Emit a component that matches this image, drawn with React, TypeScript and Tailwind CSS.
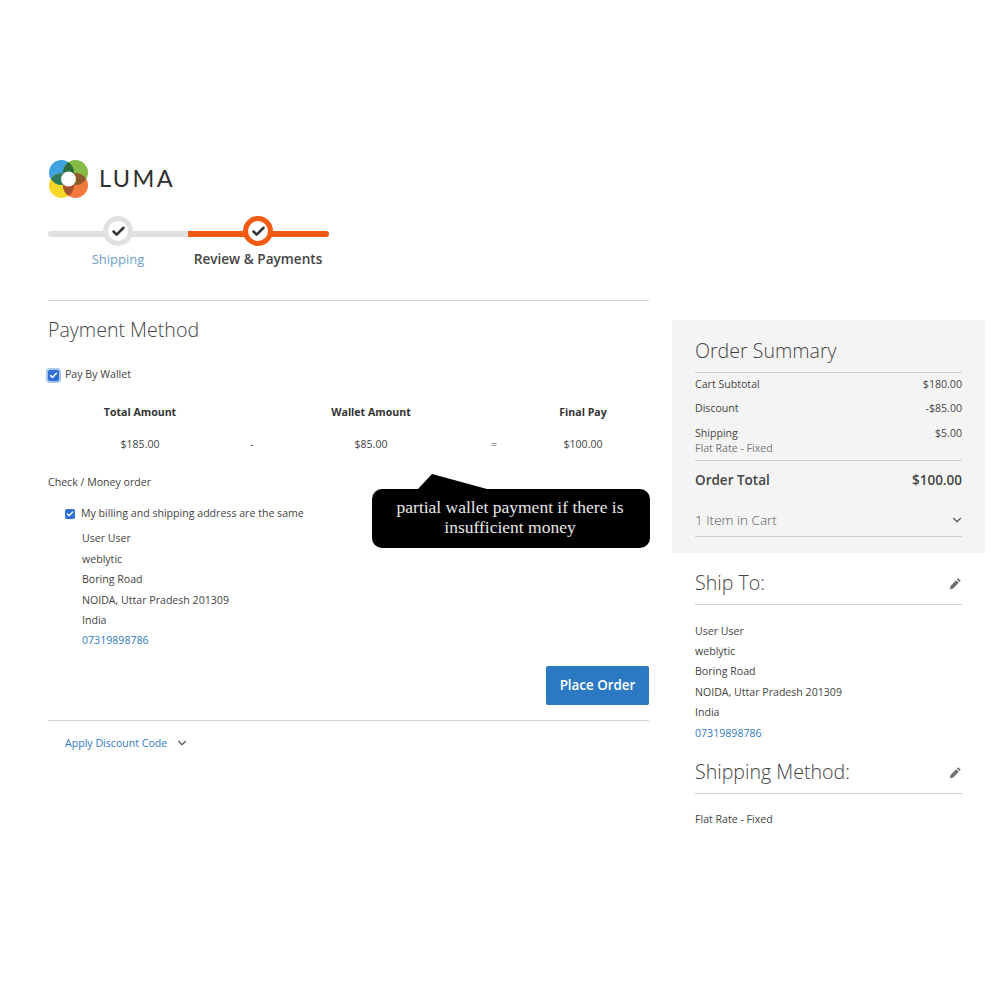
import { Check, ChevronDown } from "lucide-react";

const font = { fontFamily: '"Open Sans", sans-serif' };

function Logo() {
  return (
    <svg width="39" height="38" viewBox="0 0 39 38">
      <circle cx="12.5" cy="12.5" r="12.5" fill="#3fa3df" />
      <circle cx="26.5" cy="12.5" r="12.5" fill="#86bb45" />
      <circle cx="12.5" cy="25.5" r="12.5" fill="#f7d828" />
      <circle cx="26.5" cy="25.5" r="12.5" fill="#f37a3e" />
      <path d="M1.82 19A12.5 12.5 0 0 1 23.18 19A12.5 12.5 0 0 1 1.82 19z" fill="#2f7a5c" />
      <path d="M15.82 19A12.5 12.5 0 0 1 37.18 19A12.5 12.5 0 0 1 15.82 19z" fill="#8a5a28" />
      <path d="M19.5 2.14A12.5 12.5 0 0 1 19.5 22.86A12.5 12.5 0 0 1 19.5 2.14z" fill="#2b6b3c" />
      <path d="M19.5 15.14A12.5 12.5 0 0 1 19.5 35.86A12.5 12.5 0 0 1 19.5 15.14z" fill="#a5532a" />
      <circle cx="19.5" cy="19" r="7.5" fill="#fff" />
    </svg>
  );
}

function Step({ active, label }: { active?: boolean; label: string }) {
  return (
    <div className="flex w-[140px] flex-col items-center">
      <div className={`flex h-[30px] w-[30px] items-center justify-center rounded-full border-[5px] bg-white ${active ? "border-[#f15a12]" : "border-[#e0e0e0]"}`}>
        <Check size={15} strokeWidth={4} className="text-[#333]" />
      </div>
      <div className={`mt-[3px] leading-[20px] whitespace-nowrap ${active ? "text-[13.6px] font-semibold text-[#444]" : "text-[13px] text-[#6c9fcb]"}`}>{label}</div>
    </div>
  );
}

function Address() {
  return (
    <div className="text-[10.6px] leading-[20.4px] text-[#444]">
      <div>User User</div>
      <div>weblytic</div>
      <div>Boring Road</div>
      <div>NOIDA, Uttar Pradesh 201309</div>
      <div>India</div>
      <div className="text-[#2f7cc4]">07319898786</div>
    </div>
  );
}

function SummaryRow({ label, value, sub }: { label: string; value: string; sub?: string }) {
  return (
    <div className={`flex justify-between text-[10.6px] leading-[16px] text-[#444] ${sub ? "pt-[1px]" : ""}`}>
      <div>
        <div>{label}</div>
        {sub && <div className="leading-[15px] text-[#777]">{sub}</div>}
      </div>
      <div>{value}</div>
    </div>
  );
}

function EditIcon() {
  return (
    <svg width="13" height="13" viewBox="0 0 13 13" className="mt-[8px]">
      <path d="M9.2 1.2l2.6 2.6-1.3 1.3-2.6-2.6zM7.2 3.2l2.6 2.6-5.6 5.6-3.4.9.9-3.5z" fill="#707070" />
    </svg>
  );
}

function SideTitle({ title }: { title: string }) {
  return (
    <div className="flex h-[36px] items-start justify-between border-b border-[#cfcfcf]">
      <div className="text-[19.6px] leading-[28px] font-light text-[#444]">{title}</div>
      <EditIcon />
    </div>
  );
}

function AmountColumn({ title, value, center }: { title: string; value: string; center: string }) {
  return (
    <div className={`absolute top-0 flex w-[125px] -translate-x-1/2 flex-col items-center ${center}`}>
      <div className="text-[10.6px] leading-[16px] font-bold text-[#333]">{title}</div>
      <div className="mt-[16px] text-[10.6px] leading-[16px] text-[#444]">{value}</div>
    </div>
  );
}

export default function App() {
  return (
    <div className="relative h-[1000px] w-[1000px] overflow-hidden bg-white" style={font}>
      <div className="pt-[160px] pl-[49px]">
        <div className="flex h-[38px] items-center gap-[11px]">
          <Logo />
          <span className="text-[23.5px] leading-none font-normal tracking-[2.4px] text-[#2e2e2e]" style={{ fontFamily: '"Lato", sans-serif' }}>LUMA</span>
        </div>
      </div>
      <div className="pl-[48px]">
        <div className="relative mt-[18px] flex h-[84px] w-[281px] items-start">
          <div className="absolute top-[15px] left-0 h-[6px] w-[140px] rounded-l-full bg-[#e0e0e0]" />
          <div className="absolute top-[15px] left-[140px] h-[6px] w-[141px] rounded-r-full bg-[#f15a12]" />
          <div className="relative z-10 flex">
            <Step label="Shipping" />
            <Step active label="Review & Payments" />
          </div>
        </div>
      </div>

      <div className="flex items-start pl-[48px]">
        <div className="w-[601px] border-t border-[#d4d4d4]">
          <h2 className="mt-[15px] text-[19.6px] leading-[28px] font-light text-[#444]">Payment Method</h2>

          <label className="mt-[22px] flex h-[18px] items-center gap-[6px] text-[10.6px] text-[#444]">
            <span className="flex h-[11px] w-[11px] items-center justify-center rounded-[2px] bg-[#2f6fd6] ring-2 ring-[#a8c6f0]">
              <Check size={9} strokeWidth={4} className="text-white" />
            </span>
            <span>Pay By Wallet</span>
          </label>

          <div className="relative mt-[20px] h-[48px] text-[10.6px] leading-[16px] text-[#444]">
            <AmountColumn title="Total Amount" value="$185.00" center="left-[92px]" />
            <div className="absolute top-[32px] left-[202px]">-</div>
            <AmountColumn title="Wallet Amount" value="$85.00" center="left-[323px]" />
            <div className="absolute top-[32px] left-[443px]">=</div>
            <AmountColumn title="Final Pay" value="$100.00" center="left-[535px]" />
          </div>

          <div className="mt-[22px] text-[10.6px] leading-[16px] text-[#444]">Check / Money order</div>

          <label className="mt-[16px] ml-[17px] flex h-[16px] items-center gap-[6px] text-[10.6px] text-[#444]">
            <span className="flex h-[10px] w-[10px] items-center justify-center rounded-[2px] bg-[#2f6fd6]">
              <Check size={8} strokeWidth={4} className="text-white" />
            </span>
            <span>My billing and shipping address are the same</span>
          </label>

          <div className="mt-[6.3px] ml-[34px]">
            <Address />
          </div>

          <div className="mt-[15.7px] flex justify-end">
            <button className="h-[39px] w-[103px] rounded-[2px] bg-[#2a79c2] pb-[1px] text-[13.4px] font-semibold text-white">Place Order</button>
          </div>

          <div className="mt-[15px] flex items-center gap-[8px] border-t border-[#d4d4d4] pt-[14px] pl-[17px] text-[10.6px] leading-[16px] text-[#2f7cc4]">
            <span>Apply Discount Code</span>
            <ChevronDown size={14} className="text-[#555]" />
          </div>
        </div>

        <div className="mt-[20px] ml-[23px] w-[313px]">
          <div className="bg-[#f4f4f4] px-[23px] pt-[17px] pb-[16px]">
            <div className="border-b border-[#cfcfcf] pb-[7px] text-[19.6px] leading-[28px] font-light text-[#444]">Order Summary</div>
            <div className="mt-[3px] flex flex-col gap-[8px]">
              <SummaryRow label="Cart Subtotal" value="$180.00" />
              <SummaryRow label="Discount" value="-$85.00" />
              <SummaryRow label="Shipping" sub="Flat Rate - Fixed" value="$5.00" />
            </div>
            <div className="mt-[4px] flex justify-between border-t border-[#cfcfcf] pt-[9px] text-[13.5px] leading-[20px] font-semibold text-[#444]">
              <span>Order Total</span>
              <span>$100.00</span>
            </div>
            <div className="mt-[20px] flex h-[27px] items-start justify-between border-b border-[#cfcfcf] text-[13.5px] leading-[20px] font-light text-[#555]">
              <span>1 Item in Cart</span>
              <ChevronDown size={14} className="mt-[3px] mr-[-2px] text-[#555]" />
            </div>
          </div>

          <div className="mx-[23px] mt-[16px]">
            <SideTitle title="Ship To:" />
            <div className="mt-[15.6px]">
              <Address />
            </div>
            <div className="mt-[15.4px]">
              <SideTitle title="Shipping Method:" />
            </div>
            <div className="mt-[17px] text-[10.6px] leading-[16px] text-[#444]">Flat Rate - Fixed</div>
          </div>
        </div>
      </div>

      <div className="absolute top-[489px] left-[372px] flex h-[59px] w-[278px] items-center justify-center rounded-[10px] bg-black pr-[18px] pb-[4px] pl-[16px] text-center text-[17.5px] leading-[20px] text-[#e8e8e8]" style={{ fontFamily: '"Liberation Serif", serif' }}>
        partial wallet payment if there is insufficient money
      </div>
      <svg className="absolute top-[474px] left-[415px]" width="80" height="16" viewBox="0 0 80 16">
        <path d="M3 15L17 0L72 15z" fill="#000" />
      </svg>
    </div>
  );
}
